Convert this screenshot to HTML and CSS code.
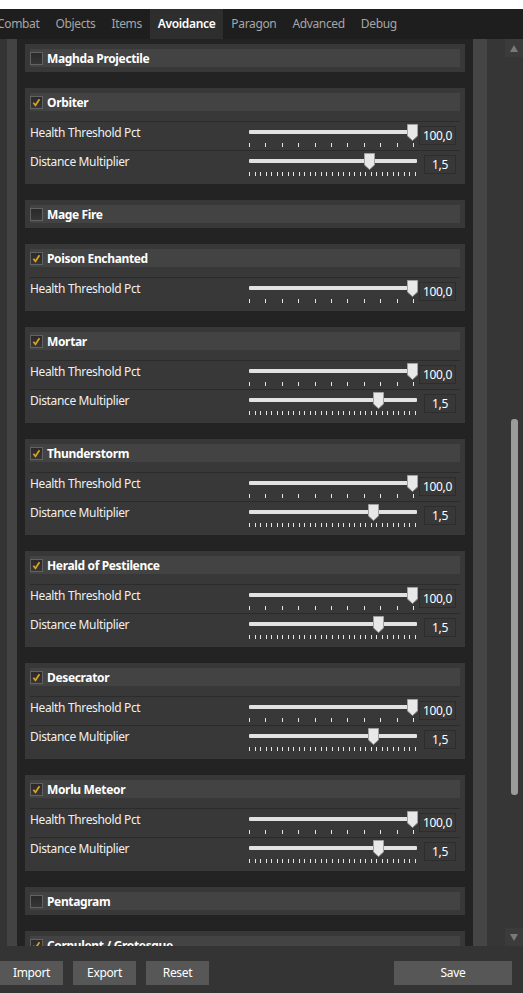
FILE: index.html
```html
<!DOCTYPE html>
<html>
<head>
<meta charset="utf-8">
<link rel="stylesheet" href="styles.css">
</head>
<body>
<div class="topstrip"></div>
<nav class="tabs">
  <span class="tab first">Combat</span>
  <span class="tab">Objects</span>
  <span class="tab">Items</span>
  <span class="tab active">Avoidance</span>
  <span class="tab">Paragon</span>
  <span class="tab">Advanced</span>
  <span class="tab">Debug</span>
</nav>
<div class="main">
  <div class="edge"></div>
  <div class="edge2"></div>
  <div class="list">

    <section class="panel">
      <div class="head"><span class="cb"></span><span class="title">Maghda Projectile</span></div>
    </section>

    <section class="panel">
      <div class="head"><span class="cb checked"><svg viewBox="0 0 13 13"><polyline points="2.8,6.8 5.3,9.8 10,2.6"/></svg></span><span class="title">Orbiter</span></div>
      <div class="rows">
        <div class="row">
          <span class="label">Health Threshold Pct</span>
          <div class="slider"><div class="track"></div><div class="ticks t11"><i></i><i></i><i></i><i></i><i></i><i></i><i></i><i></i><i></i><i></i><i></i></div><svg class="thumb" style="left:158px" viewBox="0 0 11 17"><path d="M0.5 0.5H10.5V12L5.5 16.5L0.5 12Z"/></svg></div>
          <span class="val">100,0</span>
        </div>
        <div class="row">
          <span class="label">Distance Multiplier</span>
          <div class="slider"><div class="track"></div><div class="ticks t31"><i></i><i></i><i></i><i></i><i></i><i></i><i></i><i></i><i></i><i></i><i></i><i></i><i></i><i></i><i></i><i></i><i></i><i></i><i></i><i></i><i></i><i></i><i></i><i></i><i></i><i></i><i></i><i></i><i></i><i></i><i></i></div><svg class="thumb" style="left:115px" viewBox="0 0 11 17"><path d="M0.5 0.5H10.5V12L5.5 16.5L0.5 12Z"/></svg></div>
          <span class="val">1,5</span>
        </div>
      </div>
    </section>

    <section class="panel">
      <div class="head"><span class="cb"></span><span class="title">Mage Fire</span></div>
    </section>

    <section class="panel">
      <div class="head"><span class="cb checked"><svg viewBox="0 0 13 13"><polyline points="2.8,6.8 5.3,9.8 10,2.6"/></svg></span><span class="title">Poison Enchanted</span></div>
      <div class="rows">
        <div class="row">
          <span class="label">Health Threshold Pct</span>
          <div class="slider"><div class="track"></div><div class="ticks t11"><i></i><i></i><i></i><i></i><i></i><i></i><i></i><i></i><i></i><i></i><i></i></div><svg class="thumb" style="left:158px" viewBox="0 0 11 17"><path d="M0.5 0.5H10.5V12L5.5 16.5L0.5 12Z"/></svg></div>
          <span class="val">100,0</span>
        </div>
      </div>
    </section>

    <section class="panel">
      <div class="head"><span class="cb checked"><svg viewBox="0 0 13 13"><polyline points="2.8,6.8 5.3,9.8 10,2.6"/></svg></span><span class="title">Mortar</span></div>
      <div class="rows">
        <div class="row">
          <span class="label">Health Threshold Pct</span>
          <div class="slider"><div class="track"></div><div class="ticks t11"><i></i><i></i><i></i><i></i><i></i><i></i><i></i><i></i><i></i><i></i><i></i></div><svg class="thumb" style="left:158px" viewBox="0 0 11 17"><path d="M0.5 0.5H10.5V12L5.5 16.5L0.5 12Z"/></svg></div>
          <span class="val">100,0</span>
        </div>
        <div class="row">
          <span class="label">Distance Multiplier</span>
          <div class="slider"><div class="track"></div><div class="ticks t31"><i></i><i></i><i></i><i></i><i></i><i></i><i></i><i></i><i></i><i></i><i></i><i></i><i></i><i></i><i></i><i></i><i></i><i></i><i></i><i></i><i></i><i></i><i></i><i></i><i></i><i></i><i></i><i></i><i></i><i></i><i></i></div><svg class="thumb" style="left:124px" viewBox="0 0 11 17"><path d="M0.5 0.5H10.5V12L5.5 16.5L0.5 12Z"/></svg></div>
          <span class="val">1,5</span>
        </div>
      </div>
    </section>

    <section class="panel">
      <div class="head"><span class="cb checked"><svg viewBox="0 0 13 13"><polyline points="2.8,6.8 5.3,9.8 10,2.6"/></svg></span><span class="title">Thunderstorm</span></div>
      <div class="rows">
        <div class="row">
          <span class="label">Health Threshold Pct</span>
          <div class="slider"><div class="track"></div><div class="ticks t11"><i></i><i></i><i></i><i></i><i></i><i></i><i></i><i></i><i></i><i></i><i></i></div><svg class="thumb" style="left:158px" viewBox="0 0 11 17"><path d="M0.5 0.5H10.5V12L5.5 16.5L0.5 12Z"/></svg></div>
          <span class="val">100,0</span>
        </div>
        <div class="row">
          <span class="label">Distance Multiplier</span>
          <div class="slider"><div class="track"></div><div class="ticks t31"><i></i><i></i><i></i><i></i><i></i><i></i><i></i><i></i><i></i><i></i><i></i><i></i><i></i><i></i><i></i><i></i><i></i><i></i><i></i><i></i><i></i><i></i><i></i><i></i><i></i><i></i><i></i><i></i><i></i><i></i><i></i></div><svg class="thumb" style="left:119px" viewBox="0 0 11 17"><path d="M0.5 0.5H10.5V12L5.5 16.5L0.5 12Z"/></svg></div>
          <span class="val">1,5</span>
        </div>
      </div>
    </section>

    <section class="panel">
      <div class="head"><span class="cb checked"><svg viewBox="0 0 13 13"><polyline points="2.8,6.8 5.3,9.8 10,2.6"/></svg></span><span class="title">Herald of Pestilence</span></div>
      <div class="rows">
        <div class="row">
          <span class="label">Health Threshold Pct</span>
          <div class="slider"><div class="track"></div><div class="ticks t11"><i></i><i></i><i></i><i></i><i></i><i></i><i></i><i></i><i></i><i></i><i></i></div><svg class="thumb" style="left:158px" viewBox="0 0 11 17"><path d="M0.5 0.5H10.5V12L5.5 16.5L0.5 12Z"/></svg></div>
          <span class="val">100,0</span>
        </div>
        <div class="row">
          <span class="label">Distance Multiplier</span>
          <div class="slider"><div class="track"></div><div class="ticks t31"><i></i><i></i><i></i><i></i><i></i><i></i><i></i><i></i><i></i><i></i><i></i><i></i><i></i><i></i><i></i><i></i><i></i><i></i><i></i><i></i><i></i><i></i><i></i><i></i><i></i><i></i><i></i><i></i><i></i><i></i><i></i></div><svg class="thumb" style="left:124px" viewBox="0 0 11 17"><path d="M0.5 0.5H10.5V12L5.5 16.5L0.5 12Z"/></svg></div>
          <span class="val">1,5</span>
        </div>
      </div>
    </section>

    <section class="panel">
      <div class="head"><span class="cb checked"><svg viewBox="0 0 13 13"><polyline points="2.8,6.8 5.3,9.8 10,2.6"/></svg></span><span class="title">Desecrator</span></div>
      <div class="rows">
        <div class="row">
          <span class="label">Health Threshold Pct</span>
          <div class="slider"><div class="track"></div><div class="ticks t11"><i></i><i></i><i></i><i></i><i></i><i></i><i></i><i></i><i></i><i></i><i></i></div><svg class="thumb" style="left:158px" viewBox="0 0 11 17"><path d="M0.5 0.5H10.5V12L5.5 16.5L0.5 12Z"/></svg></div>
          <span class="val">100,0</span>
        </div>
        <div class="row">
          <span class="label">Distance Multiplier</span>
          <div class="slider"><div class="track"></div><div class="ticks t31"><i></i><i></i><i></i><i></i><i></i><i></i><i></i><i></i><i></i><i></i><i></i><i></i><i></i><i></i><i></i><i></i><i></i><i></i><i></i><i></i><i></i><i></i><i></i><i></i><i></i><i></i><i></i><i></i><i></i><i></i><i></i></div><svg class="thumb" style="left:119px" viewBox="0 0 11 17"><path d="M0.5 0.5H10.5V12L5.5 16.5L0.5 12Z"/></svg></div>
          <span class="val">1,5</span>
        </div>
      </div>
    </section>

    <section class="panel">
      <div class="head"><span class="cb checked"><svg viewBox="0 0 13 13"><polyline points="2.8,6.8 5.3,9.8 10,2.6"/></svg></span><span class="title">Morlu Meteor</span></div>
      <div class="rows">
        <div class="row">
          <span class="label">Health Threshold Pct</span>
          <div class="slider"><div class="track"></div><div class="ticks t11"><i></i><i></i><i></i><i></i><i></i><i></i><i></i><i></i><i></i><i></i><i></i></div><svg class="thumb" style="left:158px" viewBox="0 0 11 17"><path d="M0.5 0.5H10.5V12L5.5 16.5L0.5 12Z"/></svg></div>
          <span class="val">100,0</span>
        </div>
        <div class="row">
          <span class="label">Distance Multiplier</span>
          <div class="slider"><div class="track"></div><div class="ticks t31"><i></i><i></i><i></i><i></i><i></i><i></i><i></i><i></i><i></i><i></i><i></i><i></i><i></i><i></i><i></i><i></i><i></i><i></i><i></i><i></i><i></i><i></i><i></i><i></i><i></i><i></i><i></i><i></i><i></i><i></i><i></i></div><svg class="thumb" style="left:124px" viewBox="0 0 11 17"><path d="M0.5 0.5H10.5V12L5.5 16.5L0.5 12Z"/></svg></div>
          <span class="val">1,5</span>
        </div>
      </div>
    </section>

    <section class="panel">
      <div class="head"><span class="cb"></span><span class="title">Pentagram</span></div>
    </section>

    <section class="panel">
      <div class="head"><span class="cb checked"><svg viewBox="0 0 13 13"><polyline points="2.8,6.8 5.3,9.8 10,2.6"/></svg></span><span class="title">Corpulent / Grotesque</span></div>
      <div class="rows">
        <div class="row">
          <span class="label">Health Threshold Pct</span>
        </div>
      </div>
    </section>

  </div>
  <div class="strip"></div>
  <div class="sb-area">
    <div class="sb">
      <div class="sb-btn"><svg viewBox="0 0 18 18"><path d="M5 13H13L9 6Z"/></svg></div>
      <div class="sb-track"><div class="sb-thumb" style="margin-top:362px;height:376px"></div></div>
      <div class="sb-btn"><svg viewBox="0 0 18 18"><path d="M5 6H13L9 13Z"/></svg></div>
    </div>
  </div>
</div>
<div class="bottom">
  <button class="btn">Import</button>
  <button class="btn">Export</button>
  <button class="btn">Reset</button>
  <button class="btn save">Save</button>
</div>
</body>
</html>
```

FILE: styles.css
```css
* { box-sizing: border-box; }
html, body {
  margin: 0;
  padding: 0;
  background: #ffffff;
  width: 523px;
  height: 993px;
  overflow: hidden;
  font-family: "Noto Sans", "Open Sans", sans-serif;
  font-size: 12px;
  letter-spacing: -0.35px;
  color: #f2f2f2;
}
.topstrip { height: 9px; background: #ffffff; }

.tabs {
  height: 30px;
  background: #1e1e1e;
  display: flex;
  overflow: hidden;
}
.tab {
  padding: 0 8px;
  line-height: 30px;
  color: #a6a6a6;
  font-size: 12px;
  white-space: nowrap;
}
.tab.first { margin-left: -11px; }
.tab.active {
  background: #2e2e2e;
  color: #ffffff;
  font-weight: 600;
}

.main {
  display: flex;
  height: 907px;
}
.edge { width: 7px; background: #343434; }
.edge2 { width: 10px; background: #434343; }
.list {
  width: 456px;
  background: #232323;
  padding: 5px 8px 0 8px;
  overflow: hidden;
  display: flex;
  flex-direction: column;
  gap: 16px;
}
.strip { width: 14px; background: #454545; }
.sb-area {
  flex: 1;
  background: #363636;
  display: flex;
  justify-content: flex-end;
}
.sb {
  width: 18px;
  display: flex;
  flex-direction: column;
}
.sb-btn {
  height: 18px;
  background: #3b3b3b;
}
.sb-btn svg { display: block; width: 18px; height: 18px; fill: #7a7a7a; }
.sb-track {
  flex: 1;
  display: flex;
  flex-direction: column;
  align-items: center;
}
.sb-thumb {
  width: 7px;
  background: #9b9b9b;
  border-radius: 3px;
}

.panel {
  flex: none;
  background: #383838;
  padding: 5px;
}
.head {
  height: 18px;
  background: #434343;
  display: flex;
  align-items: flex-start;
}
.cb {
  width: 13px;
  height: 13px;
  margin-top: 3px;
  border: 1px solid #626262;
  background: linear-gradient(#2a2a2a, #363636);
  margin-right: 4px;
  flex: none;
  display: flex;
}
.cb svg {
  width: 11px;
  height: 11px;
  fill: none;
  stroke: #dba51f;
  stroke-width: 2;
}
.title {
  font-weight: 700;
  color: #ffffff;
  line-height: 17px;
  padding-top: 1px;
}
.rows { margin-top: 10px; }
.row {
  height: 29px;
  border-top: 1px solid #2b2b2b;
  display: grid;
  grid-template-columns: 1fr 168px 39px;
  padding-right: 4px;
}
.label {
  line-height: 16px;
  margin-top: 3px;
  color: #f0f0f0;
}
.slider {
  position: relative;
  height: 28px;
}
.track {
  position: absolute;
  left: 0;
  right: 0;
  top: 8px;
  height: 4px;
  background: #e2e2e2;
  border-radius: 1px;
}
.ticks {
  position: absolute;
  left: 0;
  top: 21px;
  height: 4px;
  display: flex;
  justify-content: space-between;
}
.ticks i {
  width: 1px;
  height: 4px;
  background: #e6e6e6;
}
.t11 { width: 165px; }
.t31 { width: 167px; }
.thumb {
  position: absolute;
  top: 2px;
  width: 11px;
  height: 17px;
  fill: #e8e8e8;
  stroke: #a0a0a0;
  stroke-width: 1;
}
.val {
  justify-self: end;
  align-self: start;
  margin-top: 4px;
  height: 19px;
  min-width: 32px;
  padding: 1px 3px 0 3px;
  border: 1px solid #2d2d2d;
  line-height: 16px;
  text-align: center;
  color: #ffffff;
}

.bottom {
  height: 47px;
  background: #343434;
  display: flex;
  gap: 10px;
  padding: 15px 11px 0 0;
}
.btn {
  width: 63px;
  height: 24px;
  background: #575757;
  border: none;
  padding: 0;
  color: #ffffff;
  font-family: "Noto Sans", "Open Sans", sans-serif;
  font-size: 12px;
  letter-spacing: -0.35px;
  line-height: 24px;
}
.btn.save {
  width: 118px;
  margin-left: auto;
}
```
